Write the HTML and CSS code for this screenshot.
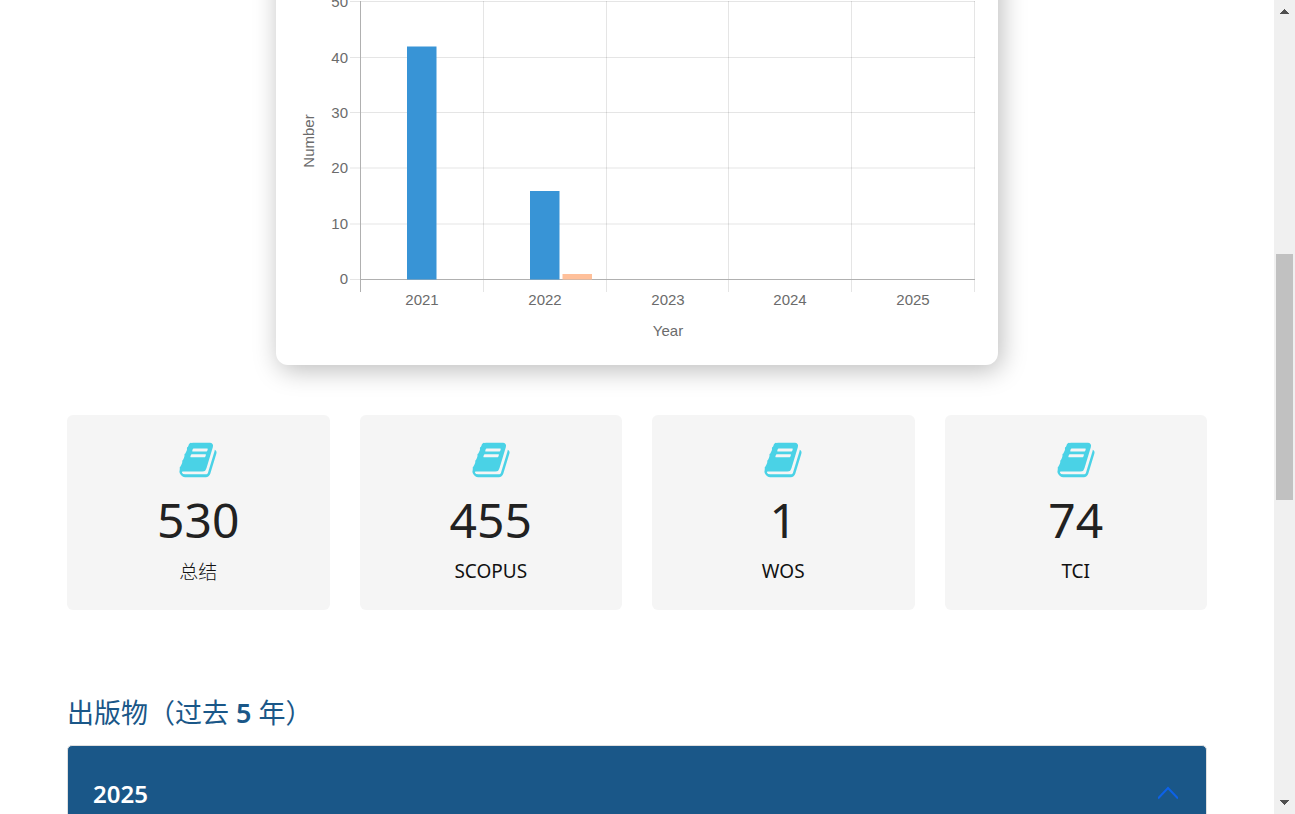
FILE: index.html
```html
<!DOCTYPE html>
<html lang="zh-CN">
<head>
<meta charset="utf-8">
<meta name="viewport" content="width=device-width, initial-scale=1">
<title>出版物</title>
<link rel="stylesheet" href="styles.css">
</head>
<body>
<svg class="sprite" aria-hidden="true">
  <symbol id="book" viewBox="0 0 1664 1792"><path d="M1639 478q40 57 18 129l-275 906q-19 64-76.500 107.500t-122.500 43.500h-923q-77 0-148.500-53.500t-99.500-131.500q-24-67-2-127 0-4 3-27t4-37q1-8-3-21.500t-3-19.500q2-11 8-21t16.500-23.500 16.500-23.500q23-38 45-91.500t30-91.500q3-10 .5-30t-.5-28q3-11 17-28t17-23q21-36 42-92t25-90q1-9-2.500-32t.5-28q4-13 22-30.500t22-22.500q19-26 42.500-84.500t27.500-96.500q1-8-3-25.500t-2-26.500q2-8 9-18t18-23 17-21q8-12 16.500-30.500t15-35 16-36 19.500-32 26.500-23.500 36-11.500 47.500 5.500l-1 3q38-9 51-9h761q74 0 114 56t18 130l-274 906q-36 119-71.500 153.500t-128.500 34.500h-869q-27 0-38 15-11 16-1 43 24 70 144 70h923q29 0 56-15.500t35-41.500l300-987q7-22 5-57 38 15 59 43zm-1064 2q-4 13 2 22.500t20 9.500h608q13 0 25.500-9.500t16.500-22.500l21-64q4-13-2-22.500t-20-9.500h-608q-13 0-25.500 9.500t-16.500 22.500zm-83 256q-4 13 2 22.500t20 9.500h608q13 0 25.500-9.500t16.500-22.500l21-64q4-13-2-22.500t-20-9.500h-608q-13 0-25.500 9.500t-16.500 22.500z"/></symbol>
</svg>
<div class="page">
  <main class="content">
    <section class="chart-card">
      <svg class="chart" viewBox="0 0 722 405" role="img" aria-label="Number by Year">
        <g class="grid">
          <path d="M207.500 41v291M330.500 41v291M452.500 41v291M575.500 41v291M698.500 41v291"/>
          <path d="M74 41.500h625M74 97.500h625M74 152.500h625M74 208h625M74 264h625M74 319.500h625"/>
        </g>
        <path class="axis" d="M84.500 41v291M84 319.500h615"/>
        <g class="bar-blue">
          <rect x="131" y="86.500" width="29.500" height="233"/>
          <rect x="254" y="231" width="29.500" height="88.500"/>
        </g>
        <rect class="bar-peach" x="286.500" y="314" width="29.500" height="5.500"/>
        <g class="tick tick-y">
          <text x="72" y="47">50</text>
          <text x="72" y="103">40</text>
          <text x="72" y="158">30</text>
          <text x="72" y="213">20</text>
          <text x="72" y="269">10</text>
          <text x="72" y="324">0</text>
        </g>
        <g class="tick tick-x">
          <text x="146" y="345">2021</text>
          <text x="269" y="345">2022</text>
          <text x="392" y="345">2023</text>
          <text x="514" y="345">2024</text>
          <text x="637" y="345">2025</text>
          <text x="392" y="376">Year</text>
          <text transform="translate(38 181) rotate(-90)">Number</text>
        </g>
      </svg>
    </section>

    <section class="stats">
      <article class="stat"><svg class="stat-icon"><use href="#book"/></svg><p class="stat-value">530</p><p class="stat-label stat-label-cjk">总结</p></article>
      <article class="stat"><svg class="stat-icon"><use href="#book"/></svg><p class="stat-value">455</p><p class="stat-label">SCOPUS</p></article>
      <article class="stat"><svg class="stat-icon"><use href="#book"/></svg><p class="stat-value">1</p><p class="stat-label">WOS</p></article>
      <article class="stat"><svg class="stat-icon"><use href="#book"/></svg><p class="stat-value">74</p><p class="stat-label">TCI</p></article>
    </section>

    <section class="publications">
      <h2 class="title">出版物（过去<span class="title-number"> 5 </span>年）</h2>
      <button class="year" type="button" aria-expanded="true">
        <span>2025</span>
        <svg class="chevron" viewBox="0 0 20 20" aria-hidden="true"><path d="M0 15.500 10 5l10 10.500"/></svg>
      </button>
    </section>
  </main>
  <div class="scrollbar" aria-hidden="true">
    <svg class="arrow" viewBox="0 0 9 5" shape-rendering="crispEdges"><path d="M0 5 4.500 0 9 5z"/></svg>
    <div class="track"><div class="thumb"></div></div>
    <svg class="arrow" viewBox="0 0 9 5" shape-rendering="crispEdges"><path d="M0 0h9L4.500 5z"/></svg>
  </div>
</div>
</body>
</html>
```
FILE: styles.css
```css
* { box-sizing: border-box; }

body {
  margin: 0;
  background: #fff;
  color: #212121;
  font-family: "Noto Sans", "Noto Sans CJK SC", sans-serif;
}

p, h2 { margin: 0; }

.sprite { position: absolute; width: 0; height: 0; }

.page {
  display: flex;
  height: 100vh;
  overflow: hidden;
}

.content {
  flex: 1;
  min-width: 0;
  overflow: hidden;
  padding: 0 67px;
}

.chart-card {
  max-width: 722px;
  margin: -40px auto 50px;
  border-radius: 12px;
  background: #fff;
  box-shadow: 3px 5px 26px rgba(0, 0, 0, 0.27);
}

.chart {
  display: block;
  width: 100%;
  font-family: "Liberation Sans", Arial, sans-serif;
  font-size: 15px;
}

.grid { fill: none; stroke: rgba(0, 0, 0, 0.1); }
.axis { fill: none; stroke: #b0b0b0; }
.bar-blue { fill: #3894d6; }
.bar-peach { fill: #ffc09a; }
.tick { fill: #6b6b6b; }
.tick-y { text-anchor: end; }
.tick-x { text-anchor: middle; }

.stats {
  display: grid;
  grid-template-columns: repeat(4, 1fr);
  gap: 30px;
}

.stat {
  display: flex;
  flex-direction: column;
  align-items: center;
  padding: 25px 24px 24px;
  border-radius: 6px;
  background: #f5f5f5;
}

.stat-icon { width: 38px; height: 40px; fill: #4ad2e6; }

.stat-value {
  margin-top: 10px;
  font-size: 48px;
  line-height: 60px;
}

.stat-label {
  margin-top: 6px;
  color: #111;
  font-size: 19px;
  line-height: 30px;
}

.stat-label-cjk {
  font-family: "Noto Sans CJK SC", sans-serif;
  font-weight: 300;
}

.publications { margin-top: 85px; }

.title {
  margin-bottom: 15px;
  color: #1a5788;
  font-family: "Noto Sans CJK SC", sans-serif;
  font-size: 27px;
  font-weight: 400;
  line-height: 34px;
}

.title-number { font-family: "Noto Sans", sans-serif; font-weight: 600; }

.year {
  display: flex;
  align-items: center;
  justify-content: space-between;
  width: 100%;
  height: 96px;
  padding: 0 28px 0 25px;
  border: 1px solid #dfdfdf;
  border-radius: 5px 5px 0 0;
  background: #1a5788;
  color: #fff;
  font-family: "Noto Sans", sans-serif;
  font-size: 24px;
  font-weight: 600;
}

.chevron { width: 20px; height: 20px; fill: none; stroke: #0d62e8; stroke-width: 2; }

.scrollbar {
  display: flex;
  flex-direction: column;
  align-items: center;
  flex: none;
  width: 21px;
  padding: 9px 0;
  background: #f0f0f0;
}

.arrow { flex: none; width: 9px; height: 5px; fill: #505050; }

.track { flex: 1; width: 17px; }

.thumb { height: 246px; margin-top: 240px; background: #c1c1c1; }
```
